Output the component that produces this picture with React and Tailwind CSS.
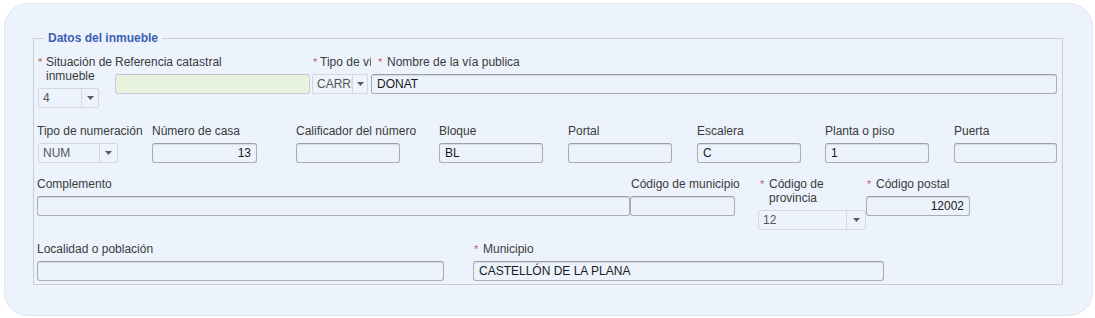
import React from "react";

const Req = ({ pl = "pl-[1px]" }) => (
  <span className={`w-[9px] shrink-0 ${pl} text-[11px] text-[#b8675c]`}>*</span>
);

const Label = ({ children, className = "" }) => (
  <div className={`text-[12px] leading-[14px] text-[#3a3a3a] whitespace-nowrap ${className}`}>{children}</div>
);

const Input = ({ value = "", className = "", right = false, green = false }) => (
  <div
    className={`h-[20px] border border-[#a9adb5] border-t-[#9a9ea6] rounded-[3px] shadow-[inset_0_1px_1px_rgba(0,0,0,0.10)] px-[5px] flex items-center text-[12px] text-[#1a1a1a] overflow-hidden whitespace-nowrap ${
      right ? "justify-end" : ""
    } ${green ? "bg-[#e8f3df] border-[#c9cdd3] border-t-[#c2c6cc] shadow-none" : ""} ${className}`}
  >
    {value}
  </div>
);

const Arrow = () => (
  <svg width="7" height="4" viewBox="0 0 7 4">
    <path d="M0 0 L7 0 L3.5 4 Z" fill="#5a5a5a" />
  </svg>
);

const Select = ({ value, className = "", tw = "w-[17px]" }) => (
  <div className={`h-[20px] border border-[#d3d7de] rounded-[2px] flex items-stretch text-[12px] text-[#555] ${className}`}>
    <div className="flex-1 min-w-0 overflow-hidden whitespace-nowrap pl-[4px] flex items-center">{value}</div>
    <div className={`${tw} shrink-0 border-l border-[#d3d7de] flex items-center justify-center`}>
      <Arrow />
    </div>
  </div>
);

export default function App() {
  return (
    <div
      className="w-[1095px] h-[318px] bg-white pt-[3px] pl-[4px] pr-[2px] pb-[2px]"
      style={{ fontFamily: '"Liberation Sans", Arial, sans-serif' }}
    >
      <div className="h-full rounded-[24px] bg-[#edf3fd] border border-[#e1e7ef] pt-[27px] pl-[28px] pr-[29px]">
        <fieldset className="border border-[#c9ced6] pl-[3px] pr-[5px] pb-[3px] min-w-0">
          <legend className="ml-[7px] px-[4px] text-[12px] leading-[14px] font-bold text-[#3c5fb3]">
            Datos del inmueble
          </legend>

          {/* Row 1 */}
          <div className="flex items-start mt-[10px]">
            <div className="w-[78px] shrink-0">
              <div className="flex text-[12px] leading-[14px] text-[#3a3a3a]">
                <Req />
                <span className="w-[69px]">Situación de inmueble</span>
              </div>
              <Select value="4" className="mt-[5px] ml-[1px] w-[61px]" />
            </div>
            <div className="w-[195px] shrink-0">
              <Label>Referencia catastral</Label>
              <Input green className="mt-[5px] w-[195px]" />
            </div>
            <div className="w-[61px] shrink-0">
              <Label className="overflow-hidden flex">
                <Req pl="pl-[3px]" />
                <span className="pl-[1px]">Tipo de vía</span>
              </Label>
              <Select value="CARRER" className="mt-[5px] ml-[2px] w-[56px]" tw="w-[15px]" />
            </div>
            <div className="flex-1 min-w-0">
              <Label className="flex pl-[7px]">
                <Req pl="pl-[0px]" />
                <span>Nombre de la vía publica</span>
              </Label>
              <Input value="DONAT" className="mt-[5px] w-full" />
            </div>
          </div>

          {/* Row 2 */}
          <div className="flex items-start mt-[16px]">
            <div className="w-[115px] shrink-0">
              <Label>Tipo de numeración</Label>
              <Select value="NUM" className="mt-[5px] ml-[1px] w-[80px]" tw="w-[18px]" />
            </div>
            <div className="w-[144px] shrink-0">
              <Label>Número de casa</Label>
              <Input value="13" right className="mt-[5px] w-[105px]" />
            </div>
            <div className="w-[143px] shrink-0">
              <Label>Calificador del número</Label>
              <Input className="mt-[5px] w-[104px]" />
            </div>
            <div className="w-[129px] shrink-0">
              <Label>Bloque</Label>
              <Input value="BL" className="mt-[5px] w-[104px]" />
            </div>
            <div className="w-[129px] shrink-0">
              <Label>Portal</Label>
              <Input className="mt-[5px] w-[104px]" />
            </div>
            <div className="w-[128px] shrink-0">
              <Label>Escalera</Label>
              <Input value="C" className="mt-[5px] w-[104px]" />
            </div>
            <div className="w-[129px] shrink-0">
              <Label>Planta o piso</Label>
              <Input value="1" className="mt-[5px] w-[104px]" />
            </div>
            <div className="flex-1 min-w-0">
              <Label>Puerta</Label>
              <Input className="mt-[5px] w-full" />
            </div>
          </div>

          {/* Row 3 */}
          <div className="flex items-start mt-[14px]">
            <div className="w-[593px] shrink-0">
              <Label>Complemento</Label>
              <Input className="mt-[5px] w-full" />
            </div>
            <div className="w-[128px] shrink-0">
              <Label className="pl-[1px]">Código de municipio</Label>
              <Input className="mt-[5px] w-[105px]" />
            </div>
            <div className="w-[108px] shrink-0">
              <div className="flex text-[12px] leading-[14px] text-[#3a3a3a] pl-[2px]">
                <Req pl="pl-[0px]" />
                <span className="w-[90px]">Código de provincia</span>
              </div>
              <Select value="12" className="mt-[5px] w-[108px]" tw="w-[19px]" />
            </div>
            <div className="flex-1 min-w-0">
              <Label className="flex pl-[1px]">
                <Req pl="pl-[0px]" />
                <span>Código postal</span>
              </Label>
              <Input value="12002" right className="mt-[5px] w-[104px]" />
            </div>
          </div>

          {/* Row 4 */}
          <div className="flex items-start mt-[12px]">
            <div className="w-[436px] shrink-0">
              <Label>Localidad o población</Label>
              <Input className="mt-[5px] w-[407px]" />
            </div>
            <div className="w-[411px] shrink-0">
              <Label className="flex pl-[1px]">
                <Req pl="pl-[0px]" />
                <span>Municipio</span>
              </Label>
              <Input value="CASTELLÓN DE LA PLANA" className="mt-[5px] w-[411px]" />
            </div>
          </div>
        </fieldset>
      </div>
    </div>
  );
}
